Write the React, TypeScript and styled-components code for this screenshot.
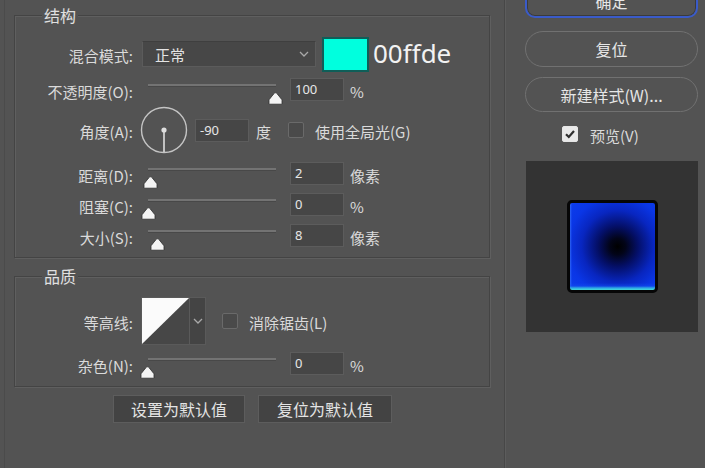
import React from 'react';
import styled, { createGlobalStyle } from 'styled-components';

const cjk = `"Noto Sans CJK SC", "Noto Sans", sans-serif`;
const latin = `"Noto Sans", "Noto Sans CJK SC", sans-serif`;

const GlobalStyle = createGlobalStyle`
  html, body { margin: 0; padding: 0; background: #535353; }
  body { width: 705px; height: 468px; overflow: hidden; font-family: ${cjk}; }
`;

const Window = styled.div`
  display: flex;
  width: 705px;
  height: 468px;
  background: #535353;
  color: #dcdcdc;
  font-family: ${cjk};
  overflow: hidden;
`;

const LeftPane = styled.div`
  box-sizing: border-box;
  width: 501px;
  margin-left: 4px;
  border-left: 1px solid #4b4b4b;
  border-right: 1px solid #474747;
  padding: 15px 0 0 9px;
  display: flex;
  flex-direction: column;
  flex-shrink: 0;
`;

const Group = styled.div<{ $top: number; $pt: number; $pb: number }>`
  position: relative;
  box-sizing: border-box;
  width: 476px;
  margin-top: ${(p) => p.$top}px;
  padding: ${(p) => p.$pt}px 0 ${(p) => p.$pb}px 0;
  border: 1px solid #444444;
  box-shadow: inset 1px 1px 0 #5f5f5f, 1px 1px 0 #5f5f5f;
  display: flex;
  flex-direction: column;
`;

const GroupTitle = styled.div`
  position: absolute;
  top: -11px;
  left: 27px;
  padding: 0 2px;
  background: #535353;
  font-size: 16px;
  line-height: 20px;
  color: #e0e0e0;
`;

const Row = styled.div<{ $h: number; $mt?: number }>`
  display: flex;
  align-items: center;
  height: ${(p) => p.$h}px;
  margin-top: ${(p) => p.$mt ?? 0}px;
`;

const Label = styled.div`
  box-sizing: border-box;
  width: 118px;
  margin-right: 9px;
  padding-top: 4px;
  text-align: right;
  font-size: 15px;
  line-height: 20px;
  white-space: nowrap;
  flex-shrink: 0;
  color: #dadada;
`;

const Dropdown = styled.div`
  box-sizing: border-box;
  width: 174px;
  height: 26px;
  background: #474747;
  border: 1px solid #5b5b5b;
  border-top-color: #3f3f3f;
  padding: 0 6px 0 12px;
  display: flex;
  align-items: center;
  justify-content: space-between;
  font-size: 15px;
  color: #e4e4e4;
`;

const Swatch = styled.div`
  box-sizing: border-box;
  width: 47px;
  height: 35px;
  margin-left: 6px;
  background: #00ffde;
  border: 2px solid #0f5e58;
`;

const HexText = styled.div`
  margin-left: 4px;
  font-family: ${latin};
  font-size: 26px;
  line-height: 1;
  color: #f2f2f2;
  padding-bottom: 2px;
`;

const Slider = styled.div`
  position: relative;
  width: 148px;
  height: 23px;
  flex-shrink: 0;
`;

const Track = styled.div`
  position: absolute;
  left: 6px;
  top: 6px;
  width: 128px;
  height: 2px;
  background: #737373;
  border-bottom: 1px solid #484848;
`;

const ThumbWrap = styled.div`
  position: absolute;
  top: 8px;
  width: 15px;
  height: 13px;
  margin-left: -7.5px;
`;

const NumBox = styled.div<{ $ml?: number }>`
  box-sizing: border-box;
  width: 54px;
  height: 23px;
  margin-left: ${(p) => p.$ml ?? 0}px;
  background: #464646;
  border: 1px solid #5c5c5c;
  padding-left: 4px;
  font-family: ${latin};
  font-size: 13px;
  line-height: 21px;
  color: #e6e6e6;
  flex-shrink: 0;
`;

const Unit = styled.div<{ $ml?: number }>`
  margin-left: ${(p) => p.$ml ?? 6}px;
  padding-top: 3px;
  font-size: 15px;
  color: #dadada;
  white-space: nowrap;
`;

const Dial = styled.svg`
  margin-left: -2px;
  flex-shrink: 0;
`;

const CheckBox = styled.div<{ $checked?: boolean; $ml?: number }>`
  box-sizing: border-box;
  width: 16px;
  height: 16px;
  margin-left: ${(p) => p.$ml ?? 0}px;
  border-radius: 2px;
  border: 1px solid ${(p) => (p.$checked ? '#e6e6e6' : '#6a6a6a')};
  background: ${(p) => (p.$checked ? '#e9e9e9' : '#4a4a4a')};
  display: flex;
  align-items: center;
  justify-content: center;
  flex-shrink: 0;
`;

const CheckText = styled.div<{ $ml: number }>`
  margin-left: ${(p) => p.$ml}px;
  padding-top: 2px;
  font-size: 15px;
  color: #dadada;
  white-space: nowrap;
`;

const ContourPicker = styled.div`
  display: flex;
  height: 48px;
  margin-left: -1px;
  border: 1px solid #5a5a5a;
  box-sizing: border-box;
`;

const ContourArrow = styled.div`
  width: 15px;
  background: #444444;
  border-left: 1px solid #5a5a5a;
  display: flex;
  align-items: center;
  justify-content: center;
`;

const ButtonRow = styled.div`
  display: flex;
  gap: 13px;
  margin-top: 8px;
  padding-left: 99px;
`;

const FlatButton = styled.div<{ $w: number }>`
  box-sizing: border-box;
  width: ${(p) => p.$w}px;
  height: 28px;
  background: #434343;
  border: 1px solid #5d5d5d;
  display: flex;
  align-items: center;
  justify-content: center;
  font-size: 16px;
  color: #e4e4e4;
`;

const RightPane = styled.div`
  box-sizing: border-box;
  width: 200px;
  border-left: 1px solid #5c5c5c;
  padding-left: 19px;
  display: flex;
  flex-direction: column;
  flex-shrink: 0;
`;

const PillButton = styled.div<{ $mt: number; $h: number; $primary?: boolean }>`
  box-sizing: border-box;
  width: 173px;
  height: ${(p) => p.$h}px;
  margin-top: ${(p) => p.$mt}px;
  border-radius: ${(p) => (p.$primary ? 10 : 18)}px;
  border: ${(p) => (p.$primary ? '2px solid #3a5bc9' : '1.5px solid #717171')};
  box-shadow: ${(p) => (p.$primary ? 'inset 0 0 0 1px #3b3b3b' : 'none')};
  display: flex;
  align-items: center;
  justify-content: center;
  font-size: 16px;
  color: #e6e6e6;
  flex-shrink: 0;
`;

const PreviewCheck = styled.div`
  display: flex;
  align-items: center;
  height: 16px;
  margin-top: 14px;
  margin-left: 37px;
`;

const PreviewBox = styled.div`
  width: 172px;
  height: 171px;
  margin-top: 19px;
  margin-left: 1px;
  background: #333333;
  display: flex;
  align-items: center;
  justify-content: center;
`;

const PreviewSquare = styled.div`
  box-sizing: border-box;
  width: 91px;
  height: 93px;
  margin-top: -1px;
  border: 3px solid #060606;
  border-radius: 5px;
  background:
    linear-gradient(to top, #44dcd8 0px, #2ea8e4 2px, rgba(20, 80, 240, 0.5) 4px, rgba(20, 70, 240, 0) 7px),
    linear-gradient(to right, rgba(70, 130, 255, 0.6) 0px, rgba(40, 90, 250, 0) 2px),
    radial-gradient(circle at 56% 50%, #000000 0px, #020418 8px, #040f66 20px, #0826c0 36px, #0a36e6 50px, #0d40ef 70px);
`;

const Thumb = ({ x }: { x: number }) => (
  <ThumbWrap style={{ left: x }}>
    <svg width="15" height="13" viewBox="0 0 15 13">
      <path
        d="M7.5 0.8 C8.3 0.8 8.8 1.3 9.3 1.9 L13.6 7.3 C13.9 7.7 14 8 14 8.5 V11.6 C14 12 13.8 12.2 13.4 12.2 H1.6 C1.2 12.2 1 12 1 11.6 V8.5 C1 8 1.1 7.7 1.4 7.3 L5.7 1.9 C6.2 1.3 6.7 0.8 7.5 0.8 Z"
        fill="#f4f4f4"
        stroke="#2d2d2d"
        strokeWidth="0.8"
      />
    </svg>
  </ThumbWrap>
);

const Chevron = () => (
  <svg width="10" height="6" viewBox="0 0 10 6">
    <path d="M1 1 L5 5 L9 1" fill="none" stroke="#a9a9a9" strokeWidth="1.3" />
  </svg>
);

const CheckMark = () => (
  <svg width="12" height="12" viewBox="0 0 12 12">
    <path d="M2 6.2 L4.8 9 L10 3" fill="none" stroke="#2f2f2f" strokeWidth="2.2" />
  </svg>
);

type SliderRowProps = {
  label: string;
  value: string;
  unit: string;
  pos: number;
  h: number;
  mt?: number;
};

const SliderRow = ({ label, value, unit, pos, h, mt }: SliderRowProps) => (
  <Row $h={h} $mt={mt}>
    <Label>{label}</Label>
    <Slider>
      <Track />
      <Thumb x={pos} />
    </Slider>
    <NumBox>{value}</NumBox>
    <Unit>{unit}</Unit>
  </Row>
);

export default function App() {
  return (
    <>
      <GlobalStyle />
      <Window>
        <LeftPane>
          <Group $top={0} $pt={20} $pb={6}>
            <GroupTitle>结构</GroupTitle>
            <Row $h={36}>
              <Label>混合模式:</Label>
              <Dropdown>
                <span>正常</span>
                <Chevron />
              </Dropdown>
              <Swatch />
              <HexText>00ffde</HexText>
            </Row>
            <SliderRow label="不透明度(O):" value="100" unit="%" pos={133} h={35} />
            <Row $h={46}>
              <Label>角度(A):</Label>
              <Dial width="48" height="48" viewBox="0 0 48 48">
                <circle cx="24" cy="24" r="22.5" fill="none" stroke="#c4c4c4" strokeWidth="1.4" />
                <line x1="24" y1="24" x2="24" y2="46" stroke="#cfcfcf" strokeWidth="1.8" />
                <circle cx="24" cy="24" r="2.6" fill="#dedede" />
              </Dial>
              <NumBox $ml={7}>-90</NumBox>
              <Unit $ml={7}>度</Unit>
              <CheckBox $ml={17} />
              <CheckText $ml={11}>使用全局光(G)</CheckText>
            </Row>
            <SliderRow label="距离(D):" value="2" unit="像素" pos={8} h={31} mt={5} />
            <SliderRow label="阻塞(C):" value="0" unit="%" pos={6} h={31} />
            <SliderRow label="大小(S):" value="8" unit="像素" pos={15} h={31} />
          </Group>

          <Group $top={18} $pt={20} $pb={7}>
            <GroupTitle>品质</GroupTitle>
            <Row $h={48}>
              <Label>等高线:</Label>
              <ContourPicker>
                <svg width="47" height="46" viewBox="0 0 47 46" style={{ display: 'block' }}>
                  <rect width="47" height="46" fill="#474747" />
                  <polygon points="0,0 47,0 0,46" fill="#fbfbfb" />
                </svg>
                <ContourArrow>
                  <Chevron />
                </ContourArrow>
              </ContourPicker>
              <CheckBox $ml={16} />
              <CheckText $ml={11}>消除锯齿(L)</CheckText>
            </Row>
            <SliderRow label="杂色(N):" value="0" unit="%" pos={5} h={31} mt={3} />
          </Group>

          <ButtonRow>
            <FlatButton $w={132}>设置为默认值</FlatButton>
            <FlatButton $w={134}>复位为默认值</FlatButton>
          </ButtonRow>
        </LeftPane>

        <RightPane>
          <PillButton $mt={-17} $h={35} $primary>
            确定
          </PillButton>
          <PillButton $mt={13} $h={36}>
            复位
          </PillButton>
          <PillButton $mt={10} $h={35}>
            新建样式(W)...
          </PillButton>
          <PreviewCheck>
            <CheckBox $checked>
              <CheckMark />
            </CheckBox>
            <CheckText $ml={12}>预览(V)</CheckText>
          </PreviewCheck>
          <PreviewBox>
            <PreviewSquare />
          </PreviewBox>
        </RightPane>
      </Window>
    </>
  );
}
